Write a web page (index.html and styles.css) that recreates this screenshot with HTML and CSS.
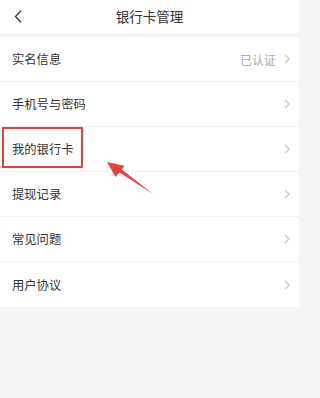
FILE: index.html
```html
<!DOCTYPE html>
<html lang="zh-CN">
<head>
<meta charset="utf-8">
<title>银行卡管理</title>
<link rel="stylesheet" href="styles.css">
</head>
<body>
<div class="page">
  <header class="topbar">
    <span class="back">
      <svg width="8" height="13" viewBox="0 0 8 13"><polyline points="7,0.8 1.5,6.5 7,12.2" fill="none" stroke="#333" stroke-width="1.3"/></svg>
    </span>
    <h1 class="title">银行卡管理</h1>
    <span></span>
  </header>
  <ul class="list">
    <li class="row"><span class="label">实名信息</span><span class="right"><span class="value">已认证</span><svg class="chev" width="6" height="10" viewBox="0 0 6 10"><polyline points="1,1 5,5 1,9" fill="none" stroke="#c4c4c4" stroke-width="1.2"/></svg></span></li>
    <li class="row"><span class="label">手机号与密码</span><span class="right"><svg class="chev" width="6" height="10" viewBox="0 0 6 10"><polyline points="1,1 5,5 1,9" fill="none" stroke="#c4c4c4" stroke-width="1.2"/></svg></span></li>
    <li class="row highlight"><span class="label">我的银行卡</span><span class="right"><svg class="chev" width="6" height="10" viewBox="0 0 6 10"><polyline points="1,1 5,5 1,9" fill="none" stroke="#c4c4c4" stroke-width="1.2"/></svg></span><span class="mark"></span></li>
    <li class="row"><span class="label">提现记录</span><span class="right"><svg class="chev" width="6" height="10" viewBox="0 0 6 10"><polyline points="1,1 5,5 1,9" fill="none" stroke="#c4c4c4" stroke-width="1.2"/></svg></span></li>
    <li class="row"><span class="label">常见问题</span><span class="right"><svg class="chev" width="6" height="10" viewBox="0 0 6 10"><polyline points="1,1 5,5 1,9" fill="none" stroke="#c4c4c4" stroke-width="1.2"/></svg></span></li>
    <li class="row"><span class="label">用户协议</span><span class="right"><svg class="chev" width="6" height="10" viewBox="0 0 6 10"><polyline points="1,1 5,5 1,9" fill="none" stroke="#c4c4c4" stroke-width="1.2"/></svg></span></li>
  </ul>
  <svg class="arrow" width="299" height="398" viewBox="0 0 299 398">
    <polygon points="153,194 121.8,169.6 124.5,165.8 107,162 115.5,177 119.6,172.6" fill="#e8413b"/>
  </svg>
</div>
</body>
</html>
```
FILE: styles.css
```css
* { box-sizing: border-box; }
html, body { margin: 0; padding: 0; }
body {
  background: #f4f5f7;
  font-family: "Noto Sans CJK SC", "Noto Sans", sans-serif;
  color: #333;
}
.page {
  position: relative;
  width: 299px;
  min-height: 398px;
  overflow: hidden;
}
.topbar {
  display: grid;
  grid-template-columns: 40px 1fr 40px;
  align-items: center;
  height: 33px;
  background: #fff;
  margin-bottom: 4px;
}
.back {
  display: flex;
  align-items: center;
  padding-left: 14px;
  height: 33px;
}
.title {
  margin: 0;
  text-align: center;
  font-size: 13.5px;
  font-weight: 400;
  color: #333;
  line-height: 33px;
}
.list {
  list-style: none;
  margin: 0;
  padding: 0;
  background: #fff;
}
.row {
  position: relative;
  display: flex;
  align-items: center;
  justify-content: space-between;
  height: 45px;
  padding: 0 9px 0 12px;
  border-bottom: 1px solid #f1f1f1;
  font-size: 12.3px;
}
.row:last-child { border-bottom: none; }
.label { color: #333; }
.right {
  display: flex;
  align-items: center;
  gap: 8px;
}
.value {
  color: #ababab;
  font-size: 12px;
}
.chev { display: block; }
.mark {
  position: absolute;
  left: 2px;
  top: 0;
  width: 81px;
  height: 41px;
  border: 2.5px solid #e0403e;
}
.arrow {
  position: absolute;
  left: 0;
  top: 0;
  pointer-events: none;
}
```
